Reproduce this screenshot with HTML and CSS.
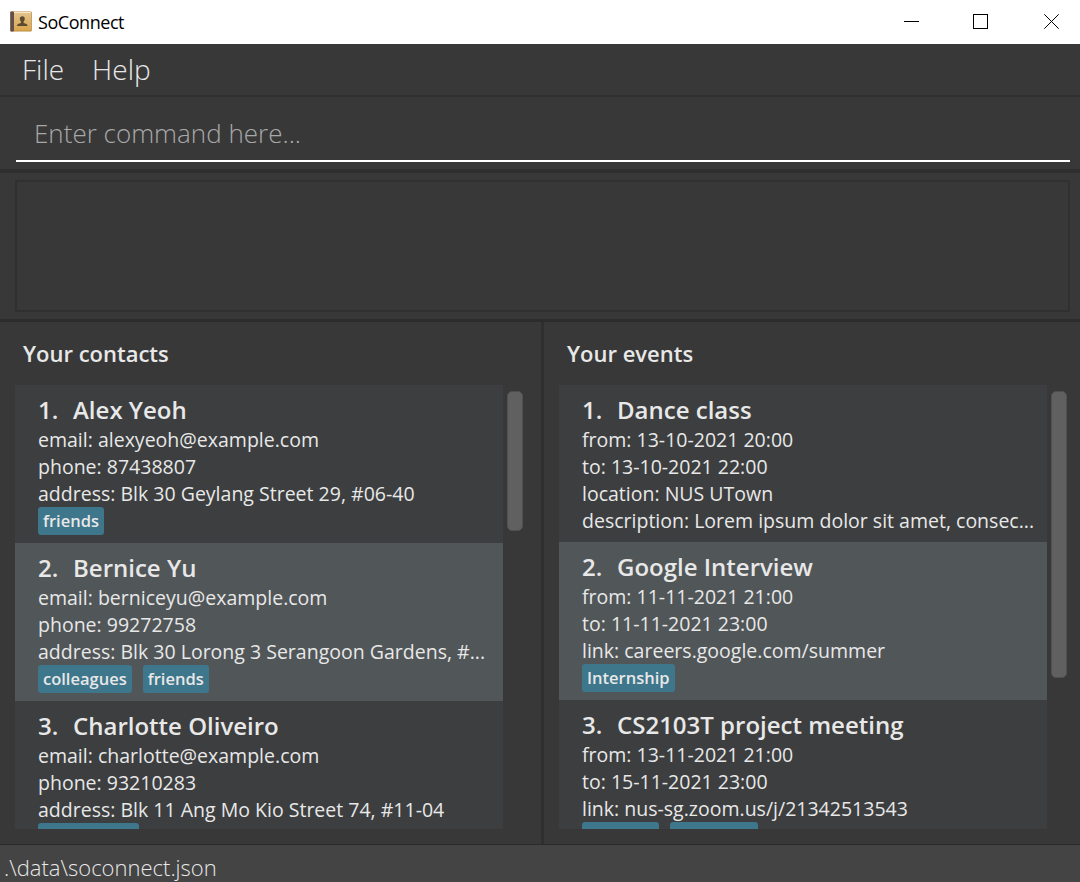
FILE: index.html
```html
<!DOCTYPE html>
<html lang="en">
<head>
<meta charset="utf-8">
<title>SoConnect</title>
<link rel="stylesheet" href="styles.css">
</head>
<body>
<div class="window">
  <header class="titlebar">
    <svg class="app-icon" width="22" height="22" viewBox="0 0 22 22">
      <defs>
        <linearGradient id="cover" x1="0" y1="0" x2="0" y2="1">
          <stop offset="0" stop-color="#e2c48f"/>
          <stop offset="1" stop-color="#dba64c"/>
        </linearGradient>
      </defs>
      <rect x="0.300" y="0.500" width="21.500" height="20" rx="1" fill="#b98a43"/>
      <rect x="4" y="1.200" width="17" height="18.400" fill="url(#cover)"/>
      <rect x="4" y="1" width="17" height="1" fill="#f6e6c4"/>
      <rect x="0.300" y="0.500" width="3.700" height="20" rx="1" fill="#5f504b"/>
      <path d="M12.300 5.200c1.600 0 2.500 1 2.500 2.500 0 1.200-.5 2-1.200 2.700v1.400c.5.7 4 .8 4 3.200H7c0-2.400 3.500-2.500 4-3.200v-1.400c-.7-.7-1.200-1.500-1.200-2.700 0-1.500.9-2.500 2.500-2.500z" fill="#5c4a33"/>
    </svg>
    <span class="app-name">SoConnect</span>
    <svg class="controls" width="156" height="16" viewBox="0 0 156 16" fill="none" stroke="#000" stroke-width="1">
      <path d="M0 7.500h15"/>
      <rect x="69.500" y="0.500" width="14" height="14"/>
      <path d="M140.300 0.300l14.400 14.400M154.700 0.300l-14.400 14.400"/>
    </svg>
  </header>
  <nav class="menubar"><span>File</span><span>Help</span></nav>
  <div class="command"><div class="field">Enter command here...</div></div>
  <div class="result"><div class="result-box"></div></div>
  <main class="panes">
    <section class="pane">
      <h2>Your contacts</h2>
      <div class="list-row">
        <div class="list">
          <article class="card">
            <h3><span>1.</span>Alex Yeoh</h3>
            <p>email: alexyeoh@example.com</p>
            <p>phone: 87438807</p>
            <p>address: Blk 30 Geylang Street 29, #06-40</p>
            <div class="tags"><span>friends</span></div>
          </article>
          <article class="card alt">
            <h3><span>2.</span>Bernice Yu</h3>
            <p>email: berniceyu@example.com</p>
            <p>phone: 99272758</p>
            <p>address: Blk 30 Lorong 3 Serangoon Gardens, #...</p>
            <div class="tags"><span>colleagues</span><span>friends</span></div>
          </article>
          <article class="card">
            <h3><span>3.</span>Charlotte Oliveiro</h3>
            <p>email: charlotte@example.com</p>
            <p>phone: 93210283</p>
            <p>address: Blk 11 Ang Mo Kio Street 74, #11-04</p>
            <div class="tags"><span class="neighbours"></span></div>
          </article>
        </div>
        <div class="thumb thumb-contacts"></div>
      </div>
    </section>
    <section class="pane events">
      <h2>Your events</h2>
      <div class="list-row">
        <div class="list">
          <article class="card short">
            <h3><span>1.</span>Dance class</h3>
            <p>from: 13-10-2021 20:00</p>
            <p>to: 13-10-2021 22:00</p>
            <p>location: NUS UTown</p>
            <p>description: Lorem ipsum dolor sit amet, consec...</p>
          </article>
          <article class="card alt">
            <h3><span>2.</span>Google Interview</h3>
            <p>from: 11-11-2021 21:00</p>
            <p>to: 11-11-2021 23:00</p>
            <p>link: careers.google.com/summer</p>
            <div class="tags"><span>Internship</span></div>
          </article>
          <article class="card">
            <h3><span>3.</span>CS2103T project meeting</h3>
            <p>from: 13-11-2021 21:00</p>
            <p>to: 15-11-2021 23:00</p>
            <p>link: nus-sg.zoom.us/j/21342513543</p>
            <div class="tags"><span class="first"></span><span class="second"></span></div>
          </article>
        </div>
        <div class="thumb thumb-events"></div>
      </div>
    </section>
  </main>
  <footer class="status">.\data\soconnect.json</footer>
</div>
</body>
</html>
```
FILE: styles.css
```css
* { box-sizing: border-box; margin: 0; padding: 0; }
body { width: 1080px; height: 882px; overflow: hidden; background: #383838; color: #e8e8e8; font-family: "Open Sans", sans-serif; }
.window { display: flex; flex-direction: column; height: 882px; }
.titlebar { height: 44px; flex: none; display: flex; align-items: center; background: #fff; color: #000; padding: 0 20px 0 10px; }
.app-name { font: 18px "Open Sans", sans-serif; margin: 0 0 0 6px; flex: 1; letter-spacing: -0.45px; }
.controls { margin-top: -1px; }
.menubar { height: 53px; flex: none; display: flex; gap: 28px; padding: 6px 22px 0; font-size: 28px; line-height: 38px; font-weight: 300; border-bottom: 2px solid #303030; }
.command { height: 76px; flex: none; padding: 10px 10px 0 16px; border-bottom: 4px solid #2e2e2e; }
.field { height: 55px; border-image: linear-gradient(#999 50%, #fff 50%) 2; border-width: 0 0 2px; border-style: solid; padding-left: 18px; font-size: 26px; line-height: 52px; font-weight: 300; color: #a8a8a8; }
.result { height: 149px; flex: none; padding: 7px 10px 7px 15px; border-bottom: 3px solid #2c2c2c; }
.result-box { height: 132px; border: 2px solid #303030; }
.panes { display: flex; height: 522px; flex: none; }
.pane { width: 544px; padding-left: 15px; border-right: 3px solid #2f2f2f; }
.pane.events { width: 536px; border-right: 0; }
h2 { height: 63px; padding-left: 8px; font-size: 22px; line-height: 62px; font-weight: 600; }
.list-row { display: flex; height: 444px; }
.list { width: 488px; overflow: hidden; }
.card { height: 158px; padding: 9px 0 0 23px; background: #3c3e3f; white-space: nowrap; }
.card.short { height: 157px; }
.card.alt { background: #515658; }
h3 { display: flex; font-size: 24px; line-height: 32px; font-weight: 600; }
h3 span { width: 35px; }
.card p { font-size: 19.530px; line-height: 27px; }
.tags { display: flex; gap: 11px; }
.tags span { height: 28px; border-radius: 3px; background: #3e768b; padding: 0 5px; font-size: 16.500px; line-height: 28px; font-weight: 600; }
.tags .neighbours { width: 101px; }
.tags .first { width: 77px; }
.tags .second { width: 88px; }
.thumb { width: 16px; margin: 6px 0 0 4px; border-radius: 5px; background: #606060; border: 1px solid #505050; }
.thumb-contacts { height: 140px; }
.thumb-events { height: 287px; }
.status { flex: 1; background: #444; border-top: 1px solid #2a2a2a; padding-left: 4px; font-size: 22px; line-height: 45px; font-weight: 300; }
```
